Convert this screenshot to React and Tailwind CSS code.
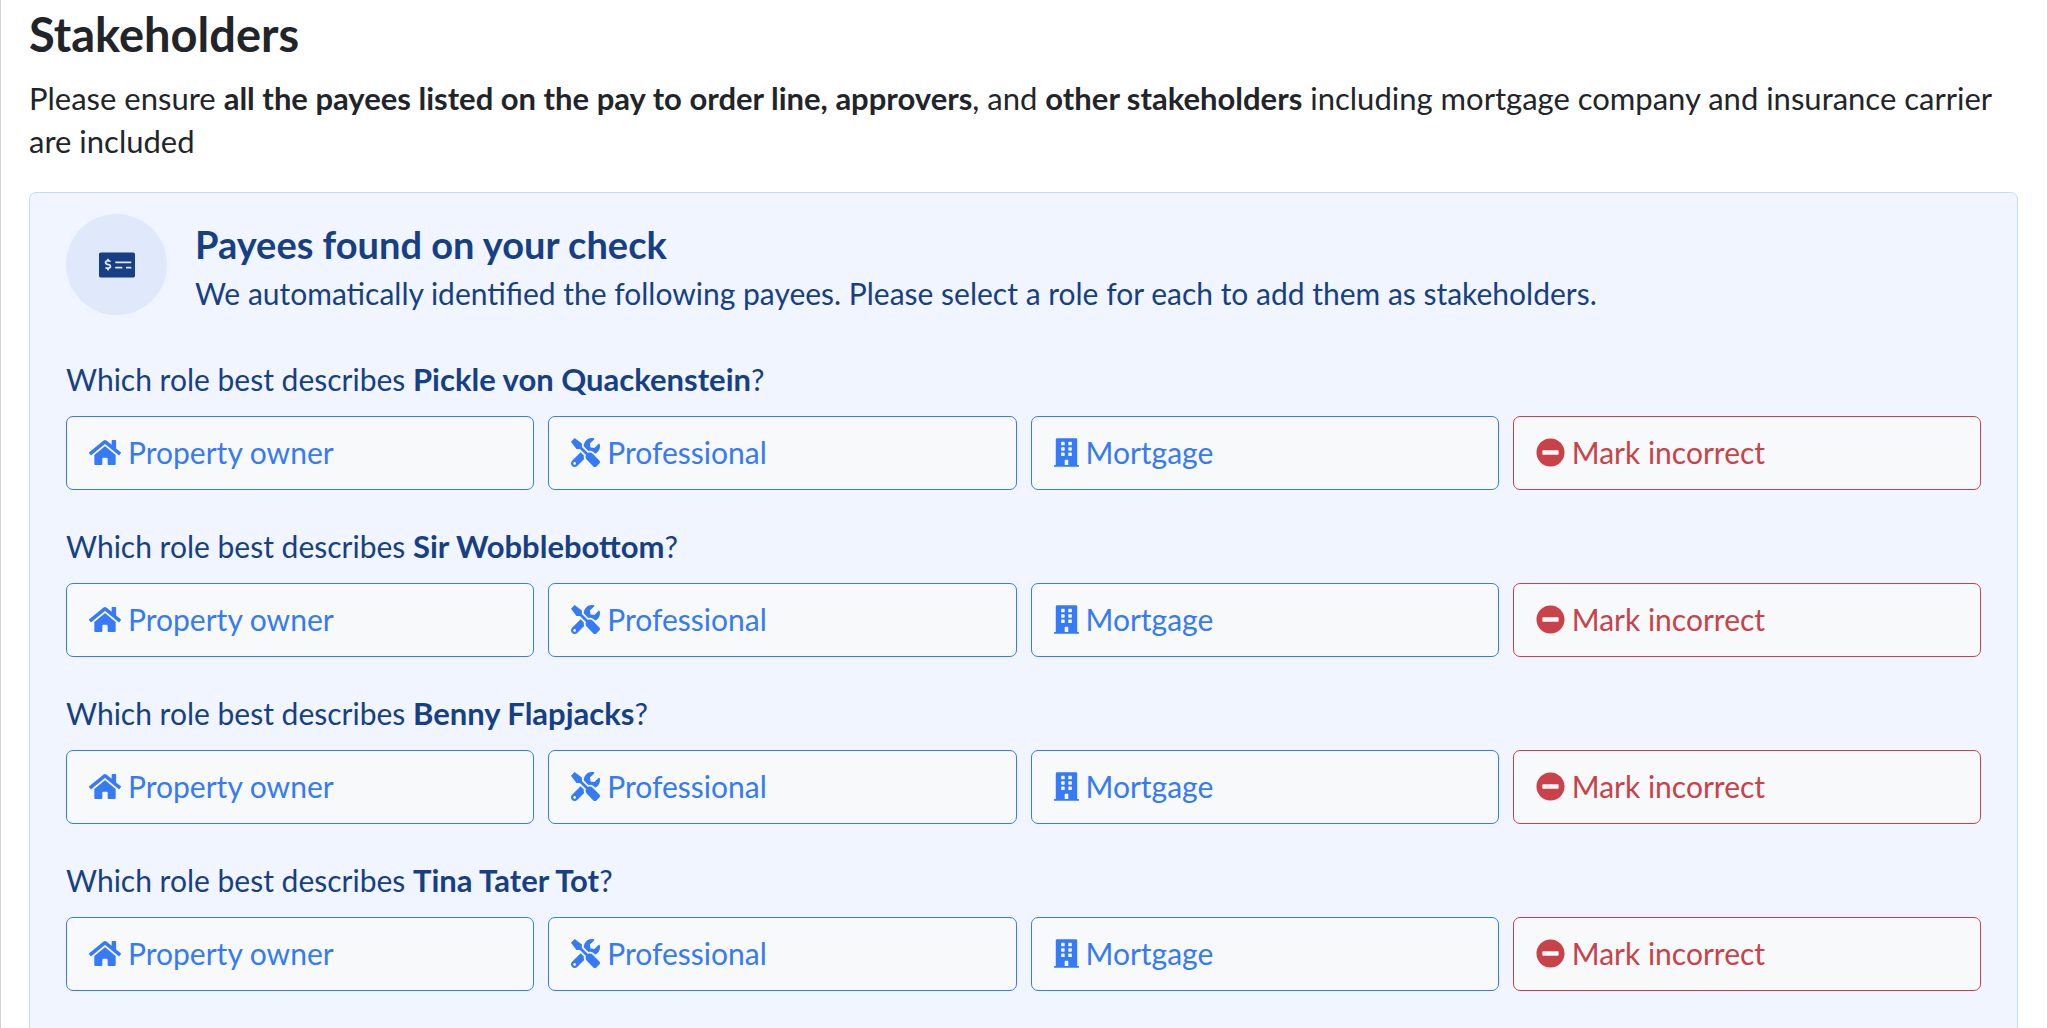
import React, { useState } from 'react';
import { FaHome, FaTools, FaBuilding, FaMinusCircle, FaMoneyCheckAlt } from 'react-icons/fa';

const payees = ['Pickle von Quackenstein', 'Sir Wobblebottom', 'Benny Flapjacks', 'Tina Tater Tot'];

const roles = [
  { id: 'owner', label: 'Property owner', Icon: FaHome, iconClass: 'w-8', color: 'text-[#357af6] border-[#357af6]' },
  { id: 'professional', label: 'Professional', Icon: FaTools, iconClass: 'w-[29px]', color: 'text-[#357af6] border-[#357af6]' },
  { id: 'mortgage', label: 'Mortgage', Icon: FaBuilding, iconClass: 'w-[25px]', color: 'text-[#357af6] border-[#357af6]' },
  { id: 'incorrect', label: 'Mark incorrect', Icon: FaMinusCircle, iconClass: 'w-[29px]', color: 'text-[#c94249] border-[#c94249]' },
];

const PayeeRow = ({ name, selected, onSelect }) => {
  return (
    <div className="mb-[35px]">
      <p className="mb-[15px]">
        Which role best describes <strong className="text-[31px]">{name}</strong>?
      </p>
      <div className="grid grid-cols-4 gap-[14px]">
        {roles.map(({ id, label, Icon, iconClass, color }) => (
          <button
            key={id}
            type="button"
            aria-pressed={selected === id}
            onClick={() => onSelect(id)}
            className={`flex h-[74px] items-center gap-[7px] rounded-[7px] border bg-[#f8f9fa] px-[22px] pb-[2px] text-left ${color}`}
          >
            <Icon className={`h-[29px] shrink-0 ${iconClass}`} />
            {label}
          </button>
        ))}
      </div>
    </div>
  );
};

const App = () => {
  const [selected, setSelected] = useState({});

  return (
    <main className="min-h-screen border-x border-[#d4d4d4] bg-white pt-[7px] pr-[29px] pl-[28px] font-['Lato','Open_Sans',sans-serif] text-[30px] leading-[43px] text-[#212529]">
      <h1 className="mb-[15px] text-[47px] leading-[55px] font-bold">Stakeholders</h1>
      <p className="mb-[29px] text-[31px]">
        Please ensure <strong>all the payees listed on the pay to order line, approvers</strong>, and{' '}
        <strong>other stakeholders</strong> including mortgage company and insurance carrier are included
      </p>

      <section className="rounded-[7px] border border-[#bfdbfe] bg-[#f0f5ff] px-9 pt-[21px] pb-6 text-[#173f84]">
        <div className="mb-[43px] flex items-end gap-7">
          <div className="flex size-[101px] shrink-0 items-center justify-center rounded-full bg-[#e0e8fb]">
            <FaMoneyCheckAlt className="h-8 w-9" />
          </div>
          <div>
            <h2 className="mb-[5px] text-[38px] leading-[46px] font-bold">Payees found on your check</h2>
            <p>
              We automatically identified the following payees. Please select a role for each to add them as
              stakeholders.
            </p>
          </div>
        </div>

        {payees.map((name) => (
          <PayeeRow
            key={name}
            name={name}
            selected={selected[name]}
            onSelect={(id) => setSelected({ ...selected, [name]: id })}
          />
        ))}
      </section>
    </main>
  );
};

export default App;
